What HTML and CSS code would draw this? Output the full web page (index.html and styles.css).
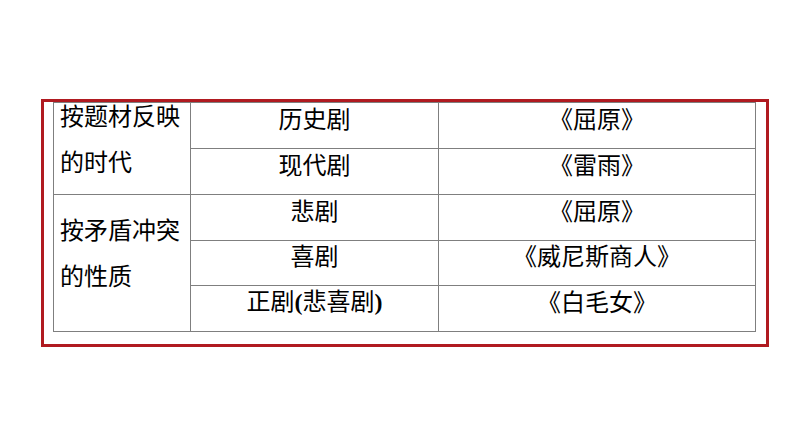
FILE: index.html
```html
<!DOCTYPE html>
<html lang="zh-CN">
<head>
<meta charset="utf-8">
<title>戏剧分类</title>
<link rel="stylesheet" href="styles.css">
</head>
<body>
<div class="page">
  <div class="frame">
    <table class="genre">
      <colgroup>
        <col class="c1">
        <col class="c2">
        <col class="c3">
      </colgroup>
      <tbody>
        <tr class="r46">
          <td class="head" rowspan="2"><div class="head-text">按题材反映<br>的时代</div></td>
          <td class="cell">历史剧</td>
          <td class="cell">《屈原》</td>
        </tr>
        <tr class="r46">
          <td class="cell">现代剧</td>
          <td class="cell">《雷雨》</td>
        </tr>
        <tr class="r46">
          <td class="head" rowspan="3"><div class="head-text">按矛盾冲突<br>的性质</div></td>
          <td class="cell">悲剧</td>
          <td class="cell">《屈原》</td>
        </tr>
        <tr class="r45">
          <td class="cell">喜剧</td>
          <td class="cell">《威尼斯商人》</td>
        </tr>
        <tr class="r46">
          <td class="cell">正剧<span class="paren">(</span>悲喜剧<span class="paren">)</span></td>
          <td class="cell">《白毛女》</td>
        </tr>
      </tbody>
    </table>
  </div>
</div>
</body>
</html>
```
FILE: styles.css
```css
html, body {
  margin: 0;
  padding: 0;
  background: #ffffff;
}
.page {
  padding: 99px 0 0 41px;
}
.frame {
  box-sizing: border-box;
  width: 728px;
  height: 248px;
  border: 3px solid #b01a20;
  padding: 0 0 0 9px;
}
.genre {
  border-collapse: collapse;
  table-layout: fixed;
  width: 702px;
  font-family: "Noto Sans CJK SC", "Liberation Serif", sans-serif;
  font-size: 24px;
  color: #000000;
}
.c1 { width: 137px; }
.c2 { width: 248px; }
.c3 { width: 317px; }
.genre td {
  border: 1px solid #7f7f7f;
  padding: 0;
}
.r46 { height: 46px; }
.r45 { height: 45px; }
.cell {
  text-align: center;
  vertical-align: middle;
  line-height: 26px;
  padding-bottom: 16px !important;
}
.head {
  vertical-align: middle;
  padding-left: 6px !important;
}
.head-text {
  line-height: 46px;
  margin-top: -22px;
}
.paren {
  font-family: "Liberation Serif", serif;
  font-weight: bold;
}
```
